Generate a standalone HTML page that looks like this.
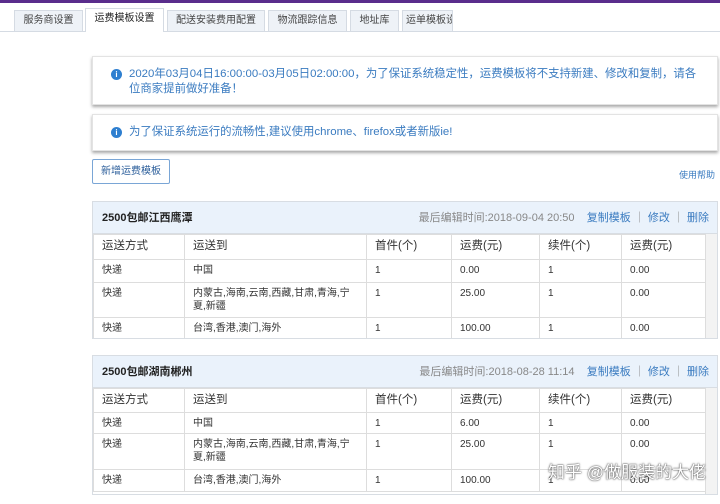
<!DOCTYPE html><html><head><meta charset="utf-8"><style>
*{box-sizing:border-box;margin:0;padding:0}
body{width:720px;height:504px;overflow:hidden;background:#fff;font-family:"Liberation Sans","Noto Sans CJK SC",sans-serif;font-size:10px;color:#333;position:relative}
.a{position:absolute}
.top{left:0;top:0;width:720px;height:3px;background:#5a2d8c}
.tab{top:10px;height:21px;border:1px solid #d5dbe3;border-bottom:none;background:#eef2f7;font-size:10px;text-align:center;line-height:20px;color:#444;white-space:nowrap;overflow:hidden}
.tab.on{background:#fff;top:8px;height:24px;color:#222}
.line{left:0;top:31px;width:720px;height:1px;background:#d5dbe3}
.note{left:92px;width:626px;background:#fff;border:1px solid #e3e3e3;box-shadow:0 2px 3px rgba(0,0,0,.35);color:#3a7bc0;font-size:11.4px;line-height:15px;padding:10px 4px 0 36px;white-space:nowrap}
.ic{position:absolute;left:18px;top:12px;width:11px;height:11px;border-radius:50%;background:#2e7fd0;color:#fff;font-size:8px;line-height:11px;text-align:center;font-weight:bold}
.btn{left:92px;top:159px;width:78px;height:25px;border:1px solid #7aa6d6;border-radius:2px;color:#2a5d9a;text-align:center;line-height:23px;font-size:10px}
.panel{left:92px;width:626px;border:1px solid #d8dde3;overflow:hidden}
.hd{height:32px;background:#eaf2fb;border-bottom:1px solid #d8dde3;position:relative;line-height:32px;padding-left:9px;font-weight:bold;font-size:11px;color:#222}
.hd .r{position:absolute;right:8px;top:0;font-weight:normal;color:#888;font-size:11px}
.hd .r span{color:#3a7bc0}
table{border-collapse:collapse;width:613px;font-size:10px;table-layout:fixed}
td{border:1px solid #ddd;vertical-align:top;padding:4px 8px 0;line-height:13px;box-sizing:border-box}
tr.h td{font-size:11.5px;padding:5px 8px 0}
.sb{position:absolute;right:0;bottom:0;width:12px;background:#f3f3f3;border-left:1px solid #ddd}
.wm{right:14px;top:458px;font-size:17px;color:#fff;text-shadow:0 0 2px #555,0 0 1px #333}
</style></head><body>
<div class="a top"></div>
<div class="a line"></div>
<div class="a tab" style="left:14px;width:69px">服务商设置</div>
<div class="a tab on" style="left:85px;width:79px">运费模板设置</div>
<div class="a tab" style="left:167px;width:98px">配送安装费用配置</div>
<div class="a tab" style="left:268px;width:79px">物流跟踪信息</div>
<div class="a tab" style="left:350px;width:49px">地址库</div>
<div class="a tab" style="left:402px;width:51px;padding-left:3px;text-align:left">运单模板设置</div>
<div class="a note" style="top:56px;height:49px"><div class="ic">i</div>2020年03月04日16:00:00-03月05日02:00:00，为了保证系统稳定性，运费模板将不支持新建、修改和复制，请各<br>位商家提前做好准备！</div>
<div class="a note" style="top:114px;height:37px"><div class="ic">i</div>为了保证系统运行的流畅性,建议使用chrome、firefox或者新版ie!</div>
<div class="a btn">新增运费模板</div>
<div class="a" style="left:679px;top:168px;color:#3a7bc0;font-size:9px">使用帮助</div>

<div class="a panel" style="top:201px;height:138px">
<div class="hd">2500包邮江西鹰潭<div class="r">最后编辑时间:2018-09-04 20:50 &nbsp;&nbsp; <span>复制模板</span> ｜ <span>修改</span> ｜ <span>删除</span></div></div>
<table><colgroup><col width="91"><col width="182"><col width="85"><col width="88"><col width="82"><col width="85"></colgroup>
<tr class="h" style="height:25px"><td>运送方式</td><td>运送到</td><td>首件(个)</td><td>运费(元)</td><td>续件(个)</td><td>运费(元)</td></tr>
<tr style="height:23px"><td>快递</td><td>中国</td><td>1</td><td>0.00</td><td>1</td><td>0.00</td></tr>
<tr style="height:35px"><td>快递</td><td>内蒙古,海南,云南,西藏,甘肃,青海,宁夏,新疆</td><td>1</td><td>25.00</td><td>1</td><td>0.00</td></tr>
<tr style="height:22px"><td>快递</td><td>台湾,香港,澳门,海外</td><td>1</td><td>100.00</td><td>1</td><td>0.00</td></tr>
</table><div class="sb" style="top:32px"></div></div>

<div class="a panel" style="top:355px;height:140px">
<div class="hd">2500包邮湖南郴州<div class="r">最后编辑时间:2018-08-28 11:14 &nbsp;&nbsp; <span>复制模板</span> ｜ <span>修改</span> ｜ <span>删除</span></div></div>
<table><colgroup><col width="91"><col width="182"><col width="85"><col width="88"><col width="82"><col width="85"></colgroup>
<tr class="h" style="height:24px"><td>运送方式</td><td>运送到</td><td>首件(个)</td><td>运费(元)</td><td>续件(个)</td><td>运费(元)</td></tr>
<tr style="height:21px"><td>快递</td><td>中国</td><td>1</td><td>6.00</td><td>1</td><td>0.00</td></tr>
<tr style="height:36px"><td>快递</td><td>内蒙古,海南,云南,西藏,甘肃,青海,宁夏,新疆</td><td>1</td><td>25.00</td><td>1</td><td>0.00</td></tr>
<tr style="height:22px"><td>快递</td><td>台湾,香港,澳门,海外</td><td>1</td><td>100.00</td><td>1</td><td>0.00</td></tr>
</table><div class="sb" style="top:32px"></div></div>
<div class="a wm">知乎 @做服装的大佬</div>
</body></html>
